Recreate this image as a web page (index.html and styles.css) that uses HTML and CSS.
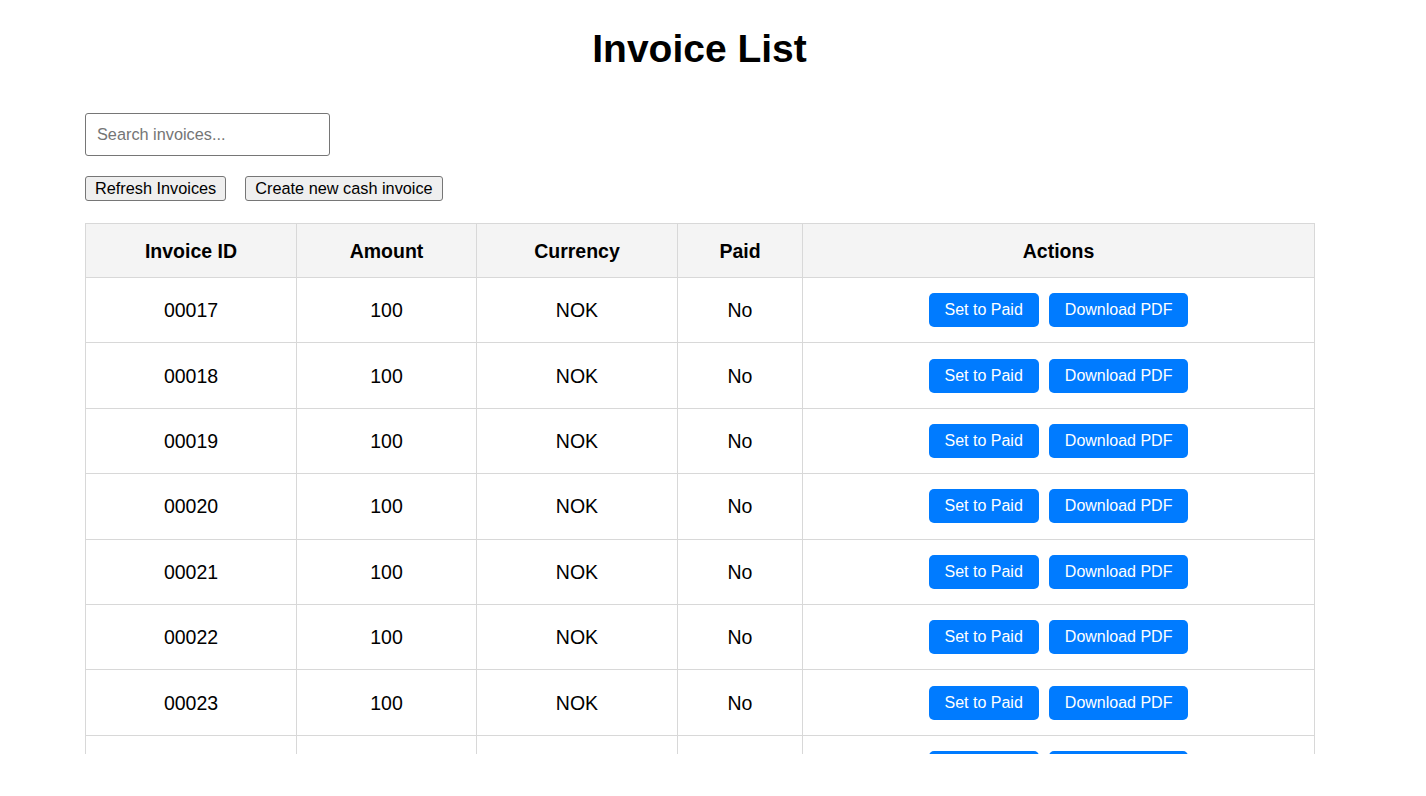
FILE: index.html
```html
<!DOCTYPE html>
<html lang="en">
<head>
<meta charset="utf-8">
<title>Invoice List</title>
<link rel="stylesheet" href="styles.css">
</head>
<body>
<div class="viewport">
  <div class="page">
    <h1 class="title">Invoice List</h1>
    <input class="search" type="text" placeholder="Search invoices...">
    <div class="toolbar">
      <button class="btn-plain">Refresh Invoices</button>
      <button class="btn-plain">Create new cash invoice</button>
    </div>
    <table class="invoices">
      <colgroup>
        <col class="c-id"><col class="c-amount"><col class="c-currency"><col class="c-paid"><col class="c-actions">
      </colgroup>
      <thead>
        <tr><th>Invoice ID</th><th>Amount</th><th>Currency</th><th>Paid</th><th>Actions</th></tr>
      </thead>
      <tbody>
        <tr><td>00017</td><td>100</td><td>NOK</td><td>No</td><td><div class="actions"><button class="btn-blue">Set to Paid</button><button class="btn-blue">Download PDF</button></div></td></tr>
        <tr><td>00018</td><td>100</td><td>NOK</td><td>No</td><td><div class="actions"><button class="btn-blue">Set to Paid</button><button class="btn-blue">Download PDF</button></div></td></tr>
        <tr><td>00019</td><td>100</td><td>NOK</td><td>No</td><td><div class="actions"><button class="btn-blue">Set to Paid</button><button class="btn-blue">Download PDF</button></div></td></tr>
        <tr><td>00020</td><td>100</td><td>NOK</td><td>No</td><td><div class="actions"><button class="btn-blue">Set to Paid</button><button class="btn-blue">Download PDF</button></div></td></tr>
        <tr><td>00021</td><td>100</td><td>NOK</td><td>No</td><td><div class="actions"><button class="btn-blue">Set to Paid</button><button class="btn-blue">Download PDF</button></div></td></tr>
        <tr><td>00022</td><td>100</td><td>NOK</td><td>No</td><td><div class="actions"><button class="btn-blue">Set to Paid</button><button class="btn-blue">Download PDF</button></div></td></tr>
        <tr><td>00023</td><td>100</td><td>NOK</td><td>No</td><td><div class="actions"><button class="btn-blue">Set to Paid</button><button class="btn-blue">Download PDF</button></div></td></tr>
        <tr><td>00024</td><td>100</td><td>NOK</td><td>No</td><td><div class="actions"><button class="btn-blue">Set to Paid</button><button class="btn-blue">Download PDF</button></div></td></tr>
      </tbody>
    </table>
  </div>
</div>
</body>
</html>
```
FILE: styles.css
```css
* { box-sizing: border-box; }
html, body {
  margin: 0;
  padding: 0;
  background: #ffffff;
}
body {
  font-family: "Liberation Sans", Arial, sans-serif;
  color: #000;
}
.viewport {
  width: 1399px;
  height: 754px;
  overflow: hidden;
}
.page {
  padding: 26px 85px 0 85px;
}
.title {
  margin: 0 0 41px 0;
  font-size: 39px;
  font-weight: bold;
  text-align: center;
  line-height: 46px;
}
.search {
  display: block;
  width: 245px;
  height: 43px;
  border: 1px solid #767676;
  border-radius: 3px;
  padding: 0 11px;
  font-family: "Liberation Sans", Arial, sans-serif;
  font-size: 16.3px;
  color: #000;
  outline: none;
}
.search::placeholder { color: #757575; }
.toolbar {
  display: flex;
  gap: 19px;
  margin-top: 20px;
}
.btn-plain {
  height: 25px;
  padding: 0 9px;
  font-family: "Liberation Sans", Arial, sans-serif;
  font-size: 16.3px;
  color: #000;
  background: #efefef;
  border: 1px solid #767676;
  border-radius: 3px;
}
.invoices {
  margin-top: 22px;
  width: 1229px;
  table-layout: fixed;
  border-collapse: collapse;
  font-size: 19.5px;
}
.c-id { width: 211px; }
.c-amount { width: 180px; }
.c-currency { width: 201px; }
.c-paid { width: 125px; }
.c-actions { width: 512px; }
.invoices th, .invoices td {
  border: 1.5px solid #d8d8d8;
  text-align: center;
  vertical-align: middle;
}
.invoices th {
  background: #f4f4f4;
  font-weight: bold;
  height: 54px;
  padding: 0 10px;
  line-height: 22px;
}
.invoices td {
  height: 65.4px;
  padding: 0 10px;
  line-height: 22px;
}
.actions {
  display: flex;
  justify-content: center;
  gap: 10px;
}
.btn-blue {
  height: 34px;
  padding: 0 16px;
  background: #007bff;
  color: #fff;
  border: none;
  border-radius: 5px;
  font-family: "Liberation Sans", Arial, sans-serif;
  font-size: 16px;
}
```
